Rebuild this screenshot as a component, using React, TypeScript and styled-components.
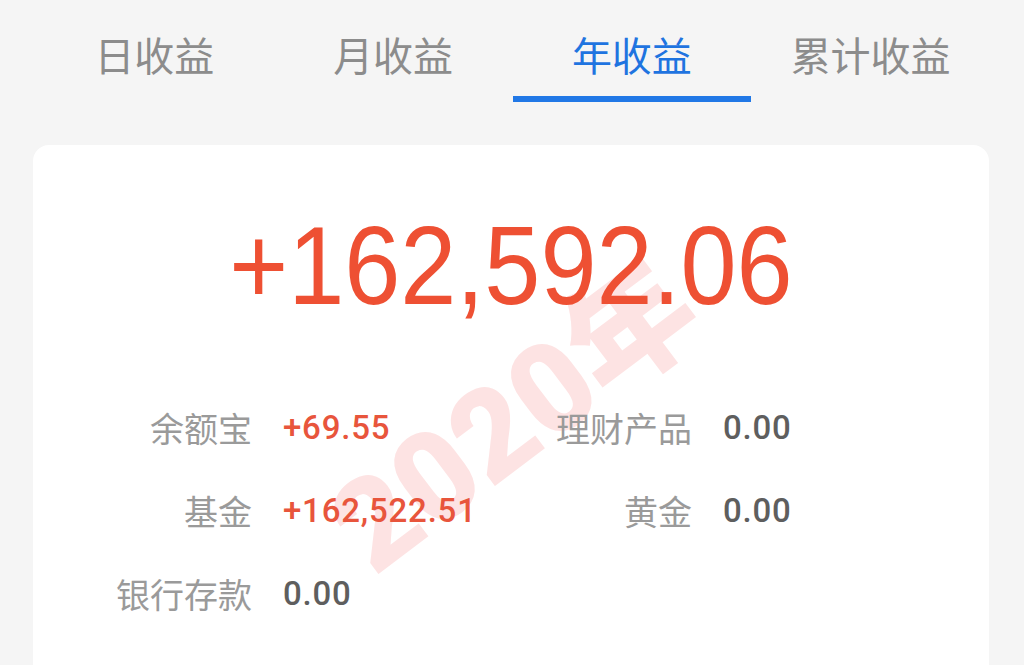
import React from "react";
import styled, { createGlobalStyle } from "styled-components";

const GlobalStyle = createGlobalStyle`
  html, body {
    margin: 0;
    padding: 0;
    background: #f5f5f5;
    overflow: hidden;
  }
  body {
    font-family: "Noto Sans CJK SC", "Noto Sans", sans-serif;
  }
`;

const Page = styled.div`
  width: 1024px;
  height: 665px;
  background: #f5f5f5;
  overflow: hidden;
`;

const TabBar = styled.div`
  display: grid;
  grid-template-columns: repeat(4, 1fr);
  padding: 0 34px 0 35px;
`;

const Tab = styled.div<{ $active?: boolean }>`
  padding-top: 34px;
  height: 62px;
  box-sizing: content-box;
  text-align: center;
  font-size: 40px;
  line-height: 40px;
  color: ${(p) => (p.$active ? "#1f74e0" : "#8c8c8c")};
  border-bottom: 6px solid ${(p) => (p.$active ? "#2178e6" : "transparent")};
`;

const Card = styled.div`
  position: relative;
  margin: 43px 35px 0 33px;
  height: 560px;
  background: #ffffff;
  border-radius: 16px;
  padding-top: 65px;
  box-sizing: border-box;
  overflow: hidden;
`;

const Watermark = styled.div`
  position: absolute;
  left: 482px;
  top: 272px;
  transform: translate(-50%, -50%) rotate(-37deg);
  font-family: Roboto, "Noto Sans CJK SC", sans-serif;
  font-weight: 900;
  font-size: 126px;
  line-height: 1;
  color: #fde3e3;
  white-space: nowrap;
  pointer-events: none;
  z-index: 0;
`;

const Total = styled.div`
  position: relative;
  z-index: 1;
  text-align: center;
  font-family: "Liberation Sans", Arial, sans-serif;
  font-size: 112px;
  line-height: 112px;
  color: #ee5033;
`;

const Condensed = styled.span`
  display: inline-block;
  transform: scaleX(0.9);
  transform-origin: center;
`;

const Grid = styled.div`
  position: relative;
  z-index: 1;
  display: grid;
  grid-template-columns: 219px 240px 138px 1fr;
  column-gap: 31px;
  row-gap: 43px;
  margin-top: 86px;
  align-items: center;
`;

const Label = styled.div`
  text-align: right;
  font-size: 34px;
  line-height: 40px;
  color: #9a9a9a;
  white-space: nowrap;
`;

const Value = styled.div<{ $up?: boolean }>`
  font-family: Roboto, "Liberation Sans", sans-serif;
  font-weight: 500;
  font-size: 33px;
  line-height: 40px;
  letter-spacing: 0.8px;
  color: ${(p) => (p.$up ? "#e8553c" : "#5e5e5e")};
  white-space: nowrap;
`;

const tabs = ["日收益", "月收益", "年收益", "累计收益"];

const items: { label: string; value: string; up?: boolean }[] = [
  { label: "余额宝", value: "+69.55", up: true },
  { label: "理财产品", value: "0.00" },
  { label: "基金", value: "+162,522.51", up: true },
  { label: "黄金", value: "0.00" },
  { label: "银行存款", value: "0.00" },
];

export default function App() {
  return (
    <Page>
      <GlobalStyle />
      <TabBar>
        {tabs.map((t, i) => (
          <Tab key={t} $active={i === 2}>
            {t}
          </Tab>
        ))}
      </TabBar>
      <Card>
        <Watermark>2020年</Watermark>
        <Total>
          <Condensed>+162,592.06</Condensed>
        </Total>
        <Grid>
          {items.map((it) => (
            <React.Fragment key={it.label}>
              <Label>{it.label}</Label>
              <Value $up={it.up}>{it.value}</Value>
            </React.Fragment>
          ))}
        </Grid>
      </Card>
    </Page>
  );
}
